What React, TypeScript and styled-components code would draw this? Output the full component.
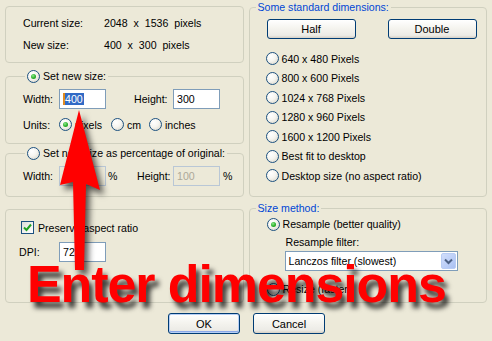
import React from 'react';
import styled, { createGlobalStyle } from 'styled-components';

const GlobalStyle = createGlobalStyle`
  html, body {
    margin: 0;
    padding: 0;
    background: #ECE9D8;
  }
  body {
    font-family: "Liberation Sans", Arial, sans-serif;
    font-size: 10.6px;
    color: #000;
  }
`;

const Dialog = styled.div`
  position: relative;
  width: 492px;
  height: 341px;
  overflow: hidden;
  background: #ECE9D8;
  box-sizing: border-box;
  padding: 6px 5px 0 5px;
`;

const Columns = styled.div`
  display: flex;
  gap: 5px;
  align-items: flex-start;
`;

const Column = styled.div`
  width: 239px;
  display: flex;
  flex-direction: column;
`;

const Group = styled.div<{ $h: number; $mt?: number }>`
  box-sizing: border-box;
  height: ${p => p.$h}px;
  margin-top: ${p => p.$mt ?? 0}px;
  border: 1px solid #D0D0BF;
  border-radius: 4px;
  display: flex;
  flex-direction: column;
`;

const Legend = styled.div<{ $ml: number; $blue?: boolean }>`
  align-self: flex-start;
  height: 13px;
  line-height: 13px;
  margin: -7px 0 0 ${p => p.$ml}px;
  padding: 0 2px;
  background: #ECE9D8;
  color: ${p => (p.$blue ? '#0046D5' : '#000')};
  display: flex;
  align-items: center;
  gap: 3px;
  white-space: nowrap;
`;

const Row = styled.div<{ $h?: number; $mt?: number; $pl?: number }>`
  display: flex;
  align-items: center;
  height: ${p => p.$h ?? 20}px;
  margin-top: ${p => p.$mt ?? 0}px;
  padding-left: ${p => p.$pl ?? 0}px;
  white-space: nowrap;
`;

const Label = styled.span<{ $w?: number; $ml?: number }>`
  width: ${p => (p.$w ? `${p.$w}px` : 'auto')};
  margin-left: ${p => p.$ml ?? 0}px;
  flex: none;
`;

const Value = styled.span`
  word-spacing: 3px;
`;

const Edit = styled.div<{ $w: number; $off?: boolean }>`
  box-sizing: border-box;
  width: ${p => p.$w}px;
  height: 20px;
  flex: none;
  border: 1px solid ${p => (p.$off ? '#B9C7D6' : '#7F9DB9')};
  background: ${p => (p.$off ? '#ECE9D8' : '#fff')};
  color: ${p => (p.$off ? '#ACA899' : '#000')};
  padding-left: 3px;
  display: flex;
  align-items: center;
`;

const Selected = styled.span`
  background: #316AC5;
  color: #fff;
  border-left: 2px solid #E08A1E;
  line-height: 12px;
  padding-right: 1px;
`;

const Pct = styled.span<{ $w?: number; $ml?: number }>`
  width: ${p => (p.$w ? `${p.$w}px` : 'auto')};
  margin-left: ${p => p.$ml ?? 0}px;
  flex: none;
`;

const RadioItem = styled.span<{ $w?: number; $gap?: number }>`
  display: inline-flex;
  align-items: center;
  gap: ${p => p.$gap ?? 3}px;
  width: ${p => (p.$w ? `${p.$w}px` : 'auto')};
  flex: none;
`;

const RadioDot = styled.span<{ $on?: boolean }>`
  box-sizing: border-box;
  width: 13px;
  height: 13px;
  flex: none;
  border-radius: 50%;
  border: 1px solid #1C5180;
  background: radial-gradient(circle at 35% 30%, #ffffff 0%, #f6f5f0 45%, #d4d1c3 100%);
  display: flex;
  align-items: center;
  justify-content: center;

  &::after {
    content: '';
    display: ${p => (p.$on ? 'block' : 'none')};
    width: 5px;
    height: 5px;
    border-radius: 50%;
    background: radial-gradient(circle at 40% 35%, #8ce88c 0%, #2bb02b 55%, #138a13 100%);
  }
`;

const CheckBox = styled.span`
  box-sizing: border-box;
  width: 13px;
  height: 13px;
  flex: none;
  border: 1px solid #1C5180;
  background: linear-gradient(135deg, #dcdcd7 0%, #f4f4f0 60%, #ffffff 100%);
  display: flex;
  align-items: center;
  justify-content: center;
`;

const XPButton = styled.button<{ $w: number; $h?: number; $default?: boolean }>`
  box-sizing: border-box;
  width: ${p => p.$w}px;
  height: ${p => p.$h ?? 21}px;
  flex: none;
  padding: 0;
  border: 1px solid #003C74;
  border-radius: 3px;
  background: linear-gradient(180deg, #ffffff 0%, #f5f4ef 45%, #ecebe6 85%, #d6d0c5 100%);
  font-family: "Liberation Sans", Arial, sans-serif;
  font-size: 11px;
  color: #000;
  box-shadow: ${p => (p.$default ? 'inset 0 0 0 1px #B7CFF5, inset 0 -1px 0 1px #8BA8E8' : 'none')};
`;

const ButtonBar = styled.div`
  display: flex;
  justify-content: center;
  gap: 13px;
  margin-top: 10px;
  padding-left: 1px;
`;

const Select = styled.div`
  box-sizing: border-box;
  width: 173px;
  height: 20px;
  border: 1px solid #7F9DB9;
  background: #fff;
  display: flex;
  align-items: center;
  padding-left: 3px;
`;

const SelectText = styled.span`
  flex: 1;
`;

const DropBtn = styled.span`
  box-sizing: border-box;
  width: 15px;
  height: 16px;
  margin-right: 1px;
  border: 1px solid #B8CCF4;
  border-radius: 2px;
  background: linear-gradient(135deg, #D2DEFB 0%, #BACDF7 60%, #A9C0F1 100%);
  display: flex;
  align-items: center;
  justify-content: center;
`;

const ArrowArt = styled.svg`
  position: absolute;
  left: 0;
  top: 0;
  pointer-events: none;
  filter: drop-shadow(4px 5px 3px rgba(0, 0, 0, 0.65));
`;

const Headline = styled.div`
  position: absolute;
  left: 27px;
  top: 258px;
  font-family: "Liberation Sans", Arial, sans-serif;
  font-weight: bold;
  font-size: 52px;
  line-height: 52px;
  letter-spacing: -1.1px;
  color: #FF0000;
  white-space: nowrap;
  text-shadow: 4px 6px 5px rgba(0, 0, 0, 0.75);
  pointer-events: none;
`;

const Radio = ({ on, children, w }: { on?: boolean; children?: React.ReactNode; w?: number }) => (
  <RadioItem $w={w}>
    <RadioDot $on={on} />
    {children}
  </RadioItem>
);

const presets = [
  '640 x 480 Pixels',
  '800 x 600 Pixels',
  '1024 x 768 Pixels',
  '1280 x 960 Pixels',
  '1600 x 1200 Pixels',
  'Best fit to desktop',
  'Desktop size (no aspect ratio)',
];

export default function App() {
  return (
    <>
      <GlobalStyle />
      <Dialog>
        <Columns>
          <Column>
            <Group $h={57}>
              <Row $h={13} $mt={9.5} $pl={17}>
                <Label $w={81}>Current size:</Label>
                <Value>2048 x 1536 pixels</Value>
              </Row>
              <Row $h={13} $mt={9} $pl={17}>
                <Label $w={81}>New size:</Label>
                <Value>400 x 300 pixels</Value>
              </Row>
            </Group>

            <Group $h={68} $mt={13}>
              <Legend $ml={19}>
                <RadioDot $on />
                Set new size:
              </Legend>
              <Row $mt={6} $pl={17}>
                <Label $w={36}>Width:</Label>
                <Edit $w={47}>
                  <Selected>400</Selected>
                </Edit>
                <Label $w={39} $ml={28}>Height:</Label>
                <Edit $w={47}>300</Edit>
              </Row>
              <Row $h={13} $mt={9} $pl={17}>
                <Label $w={36}>Units:</Label>
                <Radio on w={52}>pixels</Radio>
                <Radio w={38}>cm</Radio>
                <Radio>inches</Radio>
              </Row>
            </Group>

            <Group $h={44} $mt={9}>
              <Legend $ml={19}>
                <RadioDot />
                Set new size as percentage of original:
              </Legend>
              <Row $mt={6} $pl={17}>
                <Label $w={36}>Width:</Label>
                <Edit $w={47} $off />
                <Pct $w={29} $ml={2}>%</Pct>
                <Label $w={36}>Height:</Label>
                <Edit $w={47} $off>100</Edit>
                <Pct $ml={3}>%</Pct>
              </Row>
            </Group>

            <Group $h={94} $mt={12}>
              <Row $h={13} $mt={11} $pl={15}>
                <RadioItem $gap={4}>
                  <CheckBox>
                    <svg width="9" height="9" viewBox="0 0 9 9">
                      <polyline points="1,4.5 3.5,7 8,1.5" fill="none" stroke="#21A121" strokeWidth="2" />
                    </svg>
                  </CheckBox>
                  Preserve aspect ratio
                </RadioItem>
              </Row>
              <Row $mt={8} $pl={13}>
                <Label $w={40}>DPI:</Label>
                <Edit $w={47}>72</Edit>
              </Row>
            </Group>
          </Column>

          <Column>
            <Group $h={190} $mt={1}>
              <Legend $ml={6} $blue>Some standard dimensions:</Legend>
              <Row $mt={5} $pl={17} style={{ gap: 32 }}>
                <XPButton $w={89} $h={20}>Half</XPButton>
                <XPButton $w={89} $h={20}>Double</XPButton>
              </Row>
              <div style={{ marginTop: 10 }}>
                {presets.map(p => (
                  <Row key={p} $h={19.5} $pl={16}>
                    <Radio>{p}</Radio>
                  </Row>
                ))}
              </div>
            </Group>

            <Group $h={95} $mt={11}>
              <Legend $ml={6} $blue>Size method:</Legend>
              <Row $h={16} $mt={1} $pl={17}>
                <Radio on>Resample (better quality)</Radio>
              </Row>
              <Row $h={13} $mt={3} $pl={36}>
                Resample filter:
              </Row>
              <Row $mt={3} $pl={35}>
                <Select>
                  <SelectText>Lanczos filter (slowest)</SelectText>
                  <DropBtn>
                    <svg width="9" height="7" viewBox="0 0 9 7">
                      <polyline points="1,1.5 4.5,5 8,1.5" fill="none" stroke="#4D6185" strokeWidth="2" />
                    </svg>
                  </DropBtn>
                </Select>
              </Row>
              <Row $h={16} $mt={10} $pl={17}>
                <Radio>Resize (faster)</Radio>
              </Row>
            </Group>
          </Column>
        </Columns>

        <ButtonBar>
          <XPButton $w={72} $default>OK</XPButton>
          <XPButton $w={72}>Cancel</XPButton>
        </ButtonBar>

        <ArrowArt width="492" height="341" viewBox="0 0 492 341">
          <polygon
            points="79,110 100,190 86,184 84,270 75,270 73,182 60,185"
            fill="#FF0000"
          />
        </ArrowArt>
        <Headline>Enter dimensions</Headline>
      </Dialog>
    </>
  );
}
